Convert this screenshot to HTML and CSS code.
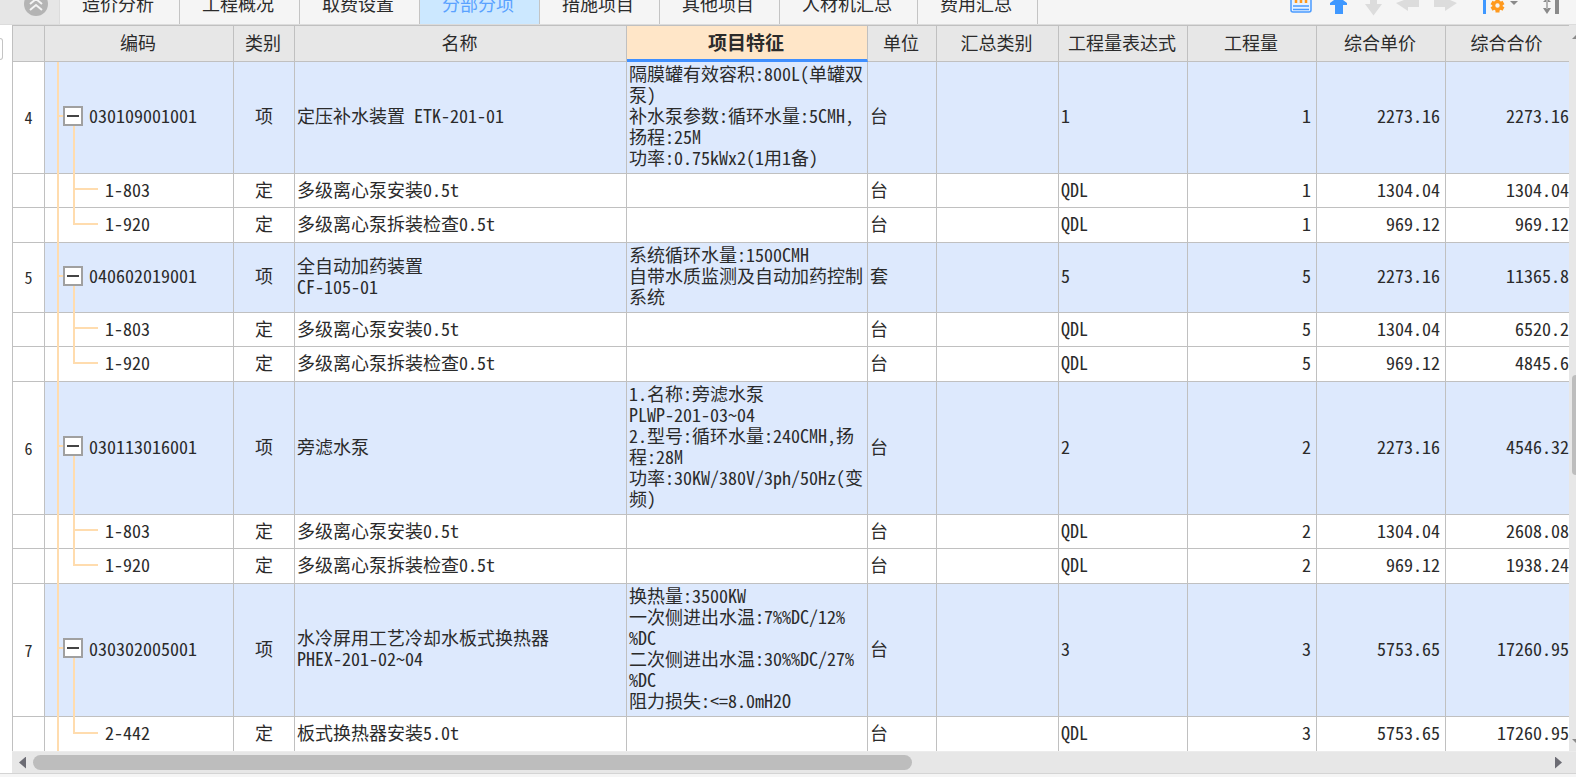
FILE: index.html
```
<!DOCTYPE html>
<html lang="zh-CN">
<head>
    <meta charset="UTF-8">
    <meta name="viewport" content="width=device-width, initial-scale=1.0">
    <title>分部分项</title>
    <link rel="stylesheet" href="styles.css">
</head>
<body>
    <div class="app">
        <header class="topbar">
            <div class="collapse">
                <button type="button" class="collapse-btn" aria-label="收起">
                    <svg width="24" height="24" viewBox="0 0 24 24">
                        <circle cx="12" cy="12" r="12" fill="#b4b4b4"/>
                        <path d="M6 12l6-5 6 5M6 18l6-5 6 5" fill="none" stroke="#f4f4f4" stroke-width="2"/>
                    </svg>
                </button>
            </div>
            <nav class="tabs">
                <button type="button" class="tab">造价分析</button>
                <button type="button" class="tab">工程概况</button>
                <button type="button" class="tab">取费设置</button>
                <button type="button" class="tab active">分部分项</button>
                <button type="button" class="tab">措施项目</button>
                <button type="button" class="tab">其他项目</button>
                <button type="button" class="tab">人材机汇总</button>
                <button type="button" class="tab">费用汇总</button>
            </nav>
            <div class="tools">
                <button type="button" aria-label="查询">
                    <svg width="26" height="24" viewBox="0 0 26 24">
                        <path d="M1 0v10q0 2 2 2h16q2 0 2-2V0" fill="#e6f1ff" stroke="#4a9bff" stroke-width="1.500"/>
                        <path d="M3 6h16M3 9.500h16" stroke="#4a9bff" stroke-width="1.500"/>
                        <path d="M6 0v3M11 0v3M16 0v3" stroke="#ff9a1f" stroke-width="2.500"/>
                    </svg>
                </button>
                <button type="button" aria-label="上移">
                    <svg width="20" height="24" viewBox="0 0 20 24">
                        <path d="M5 14V5H0V3l4-3h9l4 3v2h-4v9z" fill="#3f98ff"/>
                    </svg>
                </button>
                <button type="button" aria-label="下移">
                    <svg width="18" height="24" viewBox="0 0 18 24">
                        <path d="M6 0h7v4h5l-8.500 11.500L1 4h5z" fill="#dcdcdc"/>
                    </svg>
                </button>
                <button type="button" aria-label="左移">
                    <svg width="24" height="24" viewBox="0 0 24 24">
                        <path d="M8 0h4h11v7H12v4L0 3z" fill="#dcdcdc"/>
                    </svg>
                </button>
                <button type="button" aria-label="右移">
                    <svg width="24" height="24" viewBox="0 0 24 24">
                        <path d="M16 0H0v7h11v4l12-8z" fill="#dcdcdc"/>
                    </svg>
                </button>
                <button type="button" class="split" aria-label="列设置">
                    <svg width="36" height="24" viewBox="0 0 36 24">
                        <path d="M2.500 0v14" stroke="#3f98ff" stroke-width="3"/>
                        <path d="M15.500-1v13.500M9.500 2.500l12 6.500M9.500 9l12-6.500" stroke="#ff9a1f" stroke-width="4"/>
                        <circle cx="15.500" cy="5.500" r="3.700" fill="#f5f5f5" stroke="#ff9a1f" stroke-width="3"/>
                        <path d="M28 1h8l-4 4z" fill="#8a8a8a"/>
                    </svg>
                </button>
                <button type="button" class="split" aria-label="行高">
                    <svg width="18" height="24" viewBox="0 0 18 24">
                        <path d="M1 2h8L5-2zM1 8h8l-4 6z" fill="#8a8a8a"/>
                        <path d="M5 0v9" stroke="#b4b4b4" stroke-width="2"/>
                        <path d="M15 0v14" stroke="#8a8a8a" stroke-width="4"/>
                    </svg>
                </button>
            </div>
        </header>

        <main class="main">
            <aside class="gutter"><span class="handle"></span></aside>
            <section class="grid">
                <table class="bill">
                    <colgroup>
                        <col class="c-no">
                        <col class="c-code">
                        <col class="c-type">
                        <col class="c-name">
                        <col class="c-feature">
                        <col class="c-unit">
                        <col class="c-sum">
                        <col class="c-num">
                        <col class="c-num">
                        <col class="c-num">
                        <col>
                    </colgroup>
                    <thead>
                        <tr>
                            <th></th>
                            <th>编码</th>
                            <th>类别</th>
                            <th>名称</th>
                            <th class="current">项目特征</th>
                            <th>单位</th>
                            <th>汇总类别</th>
                            <th>工程量表达式</th>
                            <th>工程量</th>
                            <th>综合单价</th>
                            <th>综合合价</th>
                        </tr>
                    </thead>
                    <tbody>
                        <tr class="item">
                            <td class="no">4</td>
                            <td class="code"><div class="node"><button type="button" class="toggle" aria-label="折叠"></button>030109001001</div></td>
                            <td class="type">项</td>
                            <td>定压补水装置 ETK-201-01</td>
                            <td>隔膜罐有效容积:800L(单罐双<br>泵)<br>补水泵参数:循环水量:5CMH,<br>扬程:25M<br>功率:0.75kWx2(1用1备)</td>
                            <td>台</td>
                            <td></td>
                            <td>1</td>
                            <td class="num">1</td>
                            <td class="num">2273.16</td>
                            <td class="total">2273.16</td>
                        </tr>
                        <tr class="sub">
                            <td class="no"></td>
                            <td class="code"><div class="leaf">1-803</div></td>
                            <td class="type">定</td>
                            <td>多级离心泵安装0.5t</td>
                            <td></td>
                            <td>台</td>
                            <td></td>
                            <td>QDL</td>
                            <td class="num">1</td>
                            <td class="num">1304.04</td>
                            <td class="total">1304.04</td>
                        </tr>
                        <tr class="sub last">
                            <td class="no"></td>
                            <td class="code"><div class="leaf">1-920</div></td>
                            <td class="type">定</td>
                            <td>多级离心泵拆装检查0.5t</td>
                            <td></td>
                            <td>台</td>
                            <td></td>
                            <td>QDL</td>
                            <td class="num">1</td>
                            <td class="num">969.12</td>
                            <td class="total">969.12</td>
                        </tr>
                    </tbody>
                    <tbody>
                        <tr class="item">
                            <td class="no">5</td>
                            <td class="code"><div class="node"><button type="button" class="toggle" aria-label="折叠"></button>040602019001</div></td>
                            <td class="type">项</td>
                            <td>全自动加药装置<br>CF-105-01</td>
                            <td>系统循环水量:1500CMH<br>自带水质监测及自动加药控制<br>系统</td>
                            <td>套</td>
                            <td></td>
                            <td>5</td>
                            <td class="num">5</td>
                            <td class="num">2273.16</td>
                            <td class="total">11365.8</td>
                        </tr>
                        <tr class="sub">
                            <td class="no"></td>
                            <td class="code"><div class="leaf">1-803</div></td>
                            <td class="type">定</td>
                            <td>多级离心泵安装0.5t</td>
                            <td></td>
                            <td>台</td>
                            <td></td>
                            <td>QDL</td>
                            <td class="num">5</td>
                            <td class="num">1304.04</td>
                            <td class="total">6520.2</td>
                        </tr>
                        <tr class="sub last">
                            <td class="no"></td>
                            <td class="code"><div class="leaf">1-920</div></td>
                            <td class="type">定</td>
                            <td>多级离心泵拆装检查0.5t</td>
                            <td></td>
                            <td>台</td>
                            <td></td>
                            <td>QDL</td>
                            <td class="num">5</td>
                            <td class="num">969.12</td>
                            <td class="total">4845.6</td>
                        </tr>
                    </tbody>
                    <tbody>
                        <tr class="item">
                            <td class="no">6</td>
                            <td class="code"><div class="node"><button type="button" class="toggle" aria-label="折叠"></button>030113016001</div></td>
                            <td class="type">项</td>
                            <td>旁滤水泵</td>
                            <td>1.名称:旁滤水泵<br>PLWP-201-03~04<br>2.型号:循环水量:240CMH,扬<br>程:28M<br>功率:30KW/380V/3ph/50Hz(变<br>频)</td>
                            <td>台</td>
                            <td></td>
                            <td>2</td>
                            <td class="num">2</td>
                            <td class="num">2273.16</td>
                            <td class="total">4546.32</td>
                        </tr>
                        <tr class="sub">
                            <td class="no"></td>
                            <td class="code"><div class="leaf">1-803</div></td>
                            <td class="type">定</td>
                            <td>多级离心泵安装0.5t</td>
                            <td></td>
                            <td>台</td>
                            <td></td>
                            <td>QDL</td>
                            <td class="num">2</td>
                            <td class="num">1304.04</td>
                            <td class="total">2608.08</td>
                        </tr>
                        <tr class="sub last">
                            <td class="no"></td>
                            <td class="code"><div class="leaf">1-920</div></td>
                            <td class="type">定</td>
                            <td>多级离心泵拆装检查0.5t</td>
                            <td></td>
                            <td>台</td>
                            <td></td>
                            <td>QDL</td>
                            <td class="num">2</td>
                            <td class="num">969.12</td>
                            <td class="total">1938.24</td>
                        </tr>
                    </tbody>
                    <tbody>
                        <tr class="item">
                            <td class="no">7</td>
                            <td class="code"><div class="node"><button type="button" class="toggle" aria-label="折叠"></button>030302005001</div></td>
                            <td class="type">项</td>
                            <td>水冷屏用工艺冷却水板式换热器<br>PHEX-201-02~04</td>
                            <td>换热量:3500KW<br>一次侧进出水温:7%%DC/12%<br>%DC<br>二次侧进出水温:30%%DC/27%<br>%DC<br>阻力损失:&lt;=8.0mH2O</td>
                            <td>台</td>
                            <td></td>
                            <td>3</td>
                            <td class="num">3</td>
                            <td class="num">5753.65</td>
                            <td class="total">17260.95</td>
                        </tr>
                        <tr class="sub last">
                            <td class="no"></td>
                            <td class="code"><div class="leaf">2-442</div></td>
                            <td class="type">定</td>
                            <td>板式换热器安装5.0t</td>
                            <td></td>
                            <td>台</td>
                            <td></td>
                            <td>QDL</td>
                            <td class="num">3</td>
                            <td class="num">5753.65</td>
                            <td class="total">17260.95</td>
                        </tr>
                    </tbody>
                </table>
            </section>
            <div class="vscroll">
                <svg width="4" height="6" viewBox="0 0 4 6"><path d="M0 4l4-4v4z" fill="#8a8a8a"/></svg>
                <span class="vthumb"></span>
                <svg width="4" height="6" viewBox="0 0 4 6"><path d="M0 0h4v4z" fill="#8a8a8a"/></svg>
            </div>
        </main>

        <div class="hscroll">
            <button type="button" class="arrow left" aria-label="向左"></button>
            <div class="track"><div class="thumb"></div></div>
            <button type="button" class="arrow right" aria-label="向右"></button>
        </div>
        <footer class="bottom"></footer>
    </div>
</body>
</html>
```

FILE: styles.css
```
* {
    box-sizing: border-box;
}

body {
    margin: 0;
    overflow: hidden;
    background: #fff;
    color: #2b2b2b;
    font-family: "Noto Sans Mono CJK SC", "Noto Sans CJK SC", monospace;
    font-size: 18px;
}

button {
    margin: 0;
    padding: 0;
    border: none;
    background: none;
    font: inherit;
    color: inherit;
}

.app {
    display: flex;
    flex-direction: column;
    height: 100vh;
}

/* top tabs */
.topbar {
    display: flex;
    flex: none;
    height: 25px;
    background: #f5f5f5;
    border-bottom: 1px solid #dcdcdc;
}

.collapse {
    width: 60px;
    padding-left: 24px;
    background: #e6e6e6;
    border-right: 1px solid #dcdcdc;
}

.collapse-btn {
    display: block;
    margin-top: -8px;
    height: 24px;
}

.tabs {
    display: flex;
}

.tab {
    padding: 0 25px 18px 22px;
    border-right: 1px solid #c4c4c4;
    line-height: 6px;
    font-family: "Noto Sans CJK SC", sans-serif;
    white-space: nowrap;
}

.tab.active {
    background: #cce8ff;
    color: #5aa2ff;
}

.tools {
    display: flex;
    gap: 14px;
    margin-left: auto;
    padding-right: 16px;
}

.tools svg {
    display: block;
}

.split {
    margin-left: 10px;
}

/* table */
.main {
    display: flex;
    flex: 1;
    min-height: 0;
}

.gutter {
    flex: none;
    width: 12px;
    padding-top: 13px;
}

.handle {
    display: block;
    width: 3px;
    height: 22px;
    border: 1px solid #c4c4c4;
    border-left: none;
    border-radius: 0 4px 4px 0;
}

.grid {
    flex: 1;
    min-width: 0;
    overflow: hidden;
}

.bill {
    width: 100%;
    table-layout: fixed;
    border-collapse: separate;
    border-spacing: 0;
    border-left: 1px solid #c0c0c0;
    border-top: 1px solid #c0c0c0;
}

.c-no { width: 32px; }
.c-code { width: 189px; }
.c-type { width: 61px; }
.c-name { width: 332px; }
.c-feature { width: 241px; }
.c-unit { width: 69px; }
.c-sum { width: 122px; }
.c-num { width: 129px; }

th,
td {
    padding: 0 0 3px 2px;
    border-right: 1px solid #c0c0c0;
    border-bottom: 1px solid #c0c0c0;
    line-height: 21px;
    text-align: left;
    white-space: nowrap;
}

th:last-child,
td:last-child {
    border-right: none;
}

th {
    height: 36px;
    padding: 0 2px 3px 0;
    background: #e7e7e7;
    font-weight: normal;
    text-align: center;
}

th.current {
    background: #ffe6c8;
    border-bottom: 3px solid #3f8fff;
    font-size: 19px;
    font-weight: bold;
}

.item td {
    padding-top: 1px;
    padding-bottom: 5px;
    background: #dde9fd;
}

.sub td {
    height: 34px;
}

.sub.last td {
    height: 35px;
}

.item td.no {
    padding: 0;
    background: #fff;
    font-size: 16px;
    text-align: center;
}

td.type {
    padding-left: 0;
    text-align: center;
}

td.num {
    padding-right: 5px;
    text-align: right;
}

td.total {
    text-align: right;
}

/* tree lines */
td.code {
    position: relative;
    padding-left: 18px;
}

td.code::before,
td.code::after {
    content: "";
    position: absolute;
    top: 0;
    bottom: -1px;
    width: 2px;
    background: #ffdcae;
}

td.code::before {
    left: 12px;
}

td.code::after {
    left: 28px;
}

.item td.code::after {
    top: 50%;
}

.last td.code::after {
    bottom: 50%;
}

.node {
    display: flex;
    align-items: center;
}

.node::before {
    content: "";
    position: absolute;
    left: 13px;
    width: 6px;
    height: 2px;
    background: #ffdcae;
}

.toggle {
    display: flex;
    align-items: center;
    justify-content: center;
    position: relative;
    z-index: 1;
    width: 20px;
    height: 20px;
    margin-right: 6px;
    border: 2px solid #a0a0a0;
    background: #fff;
}

.toggle::before {
    content: "";
    width: 12px;
    height: 2px;
    background: #444;
}

.leaf {
    display: flex;
    align-items: center;
    padding-left: 10px;
}

.leaf::before {
    content: "";
    width: 25px;
    height: 2px;
    margin-right: 7px;
    background: #ffdcae;
}

/* scrollbars */
.vscroll {
    display: flex;
    flex: none;
    flex-direction: column;
    justify-content: space-between;
    width: 7px;
    padding: 10px 0 6px 3px;
    background: #e7e7e7;
}

.vthumb {
    display: block;
    height: 100px;
    margin-top: 70px;
    border-radius: 4px 0 0 4px;
    background: #bdbdbd;
}

.hscroll {
    display: flex;
    flex: none;
    align-items: center;
    height: 22px;
    margin-left: 12px;
    padding: 0 14px 0 7px;
    border-top: 1px solid #ececec;
    background: #e7e7e7;
}

.arrow {
    flex: none;
    width: 7px;
    height: 12px;
    background: #6c6c74;
}

.arrow.left {
    clip-path: polygon(0 50%, 100% 0, 100% 100%);
}

.arrow.right {
    clip-path: polygon(0 0, 100% 50%, 0 100%);
}

.track {
    flex: 1;
    margin: 0 7px;
}

.thumb {
    width: 58%;
    height: 15px;
    border-radius: 8px;
    background: #bdbdbd;
}

.bottom {
    flex: none;
    height: 4px;
    border-top: 1px solid #d4d4d4;
    background: #f5f5f5;
}
```
